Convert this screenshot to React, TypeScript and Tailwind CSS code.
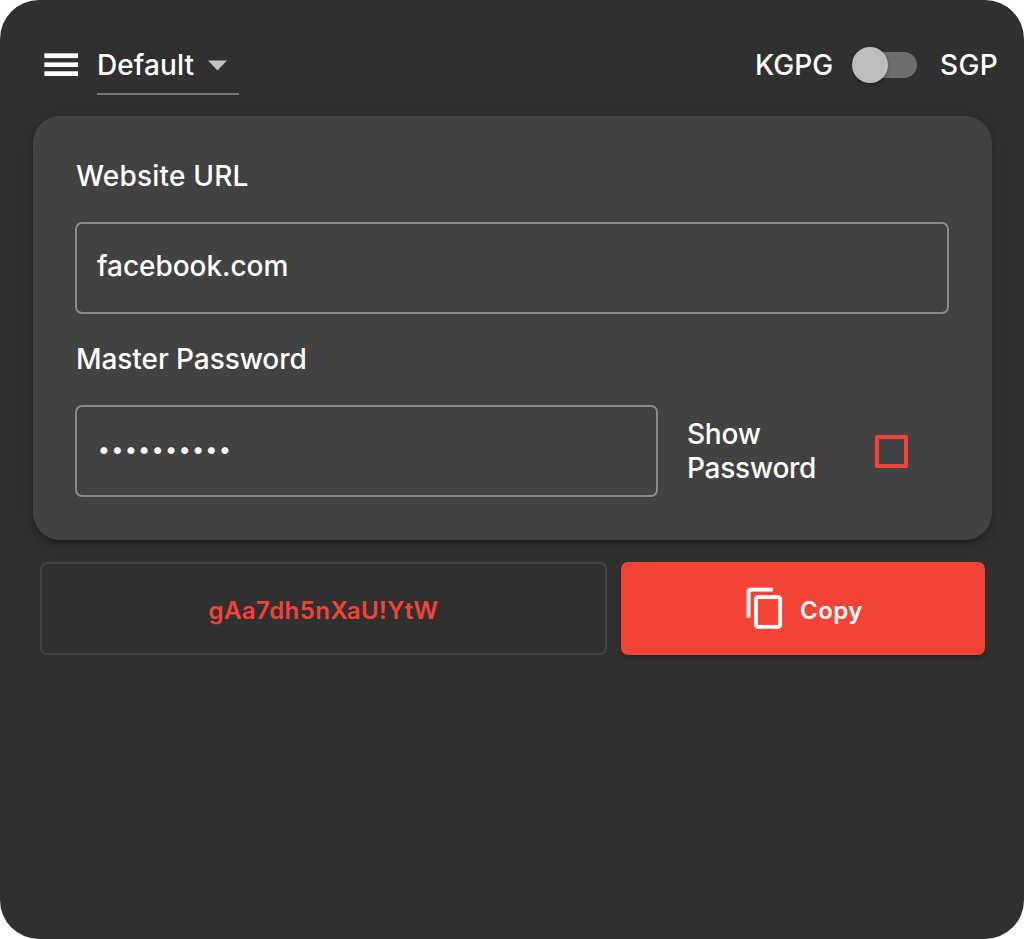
import React from "react";

function MenuIcon() {
  return (
    <svg className="h-[23px] w-[34px] shrink-0" viewBox="0 0 34 23" fill="#fff" aria-hidden="true">
      <rect x="0.4" y="0.3" width="33.6" height="4.8" />
      <rect x="0.4" y="9.4" width="33.6" height="4.6" />
      <rect x="0.4" y="18.3" width="33.6" height="4.7" />
    </svg>
  );
}

function CopyIcon() {
  return (
    <svg className="h-[44.6px] w-[44.6px] shrink-0" viewBox="0 0 24 24" fill="currentColor" stroke="currentColor" strokeWidth="0.1" aria-hidden="true">
      <path d="M16 1H4c-1.1 0-2 .9-2 2v14h2V3h12V1zm3 4H8c-1.1 0-2 .9-2 2v14c0 1.1.9 2 2 2h11c1.1 0 2-.9 2-2V7c0-1.1-.9-2-2-2zm0 16H8V7h11v14z" />
    </svg>
  );
}

function Header() {
  return (
    <header className="flex h-[116px] items-start pl-11">
      <button className="mt-[53px]" aria-label="Menu">
        <MenuIcon />
      </button>
      <button className="mt-9 ml-[19px] flex h-[59px] w-[142px] items-center border-b-2 border-[#797979] text-left">
        <span className="w-[111px] whitespace-nowrap tracking-[0.1px]">Default</span>
        <svg className="mt-[2px] h-[11px] w-[19px]" viewBox="0 0 19 11" fill="#c1c1c1" aria-hidden="true">
          <path d="M0 .5h19L9.500 10.600z" />
        </svg>
      </button>
      <div className="mt-[47px] ml-auto flex h-9 items-center pr-[26px]">
        <span>KGPG</span>
        <button className="ml-[19px] flex h-9 w-[65px] items-center" role="switch" aria-checked="false" aria-label="Mode">
          <span className="z-10 size-9 shrink-0 rounded-full bg-[#bdbdbd] shadow-[0_2px_4px_rgba(0,0,0,0.25)]" />
          <span className="-ml-7 h-[26px] w-[57px] shrink-0 rounded-full bg-[#6e6e6e]" />
        </button>
        <span className="ml-[23px] tracking-[0.3px]">SGP</span>
      </div>
    </header>
  );
}

export default function App() {
  return (
    <div className="h-[939px] w-[1024px] bg-white">
      <main className="h-[939px] overflow-hidden rounded-[39px] bg-[#303030] font-['Inter','Liberation_Sans',sans-serif] text-[28px] leading-[34px] font-medium text-white">
        <Header />
        <section className="mr-8 ml-[33px] h-[424px] rounded-[27px] bg-[#424242] px-[43px] pt-[43px] shadow-[0_4px_3px_-2px_rgba(0,0,0,0.12),0_3px_5px_rgba(0,0,0,0.12),0_4px_16px_rgba(0,0,0,0.22)]">
          <div className="flex h-[63px]">
            <span className="whitespace-nowrap tracking-[0.2px]">Website URL</span>
          </div>
          <div className="-ml-px flex h-[92px] w-[874px] items-center rounded-[7px] border-2 border-[#8b8b8b] pb-1 pl-5">
            <span className="tracking-[-0.05px]">facebook.com</span>
          </div>
          <div className="mt-7 flex h-[63px]">
            <span className="whitespace-nowrap tracking-[-0.07px]">Master Password</span>
          </div>
          <div className="-ml-px flex items-center">
            <div className="flex h-[92px] w-[583px] items-center rounded-[7px] border-2 border-[#8b8b8b] pb-1 pl-[21px]">
              <span className="text-[22px] tracking-[1.72px]">••••••••••</span>
            </div>
            <span className="ml-[29px] w-[160px] tracking-[-0.25px]">
              Show
              <br />
              Password
            </span>
            <button className="ml-7 size-[33px] rounded-[2px] border-4 border-[#f44336]" role="checkbox" aria-checked="false" aria-label="Show password" />
          </div>
        </section>
        <div className="mt-[22px] ml-10 flex gap-3.5 text-[24px] font-semibold">
          <div className="flex h-[93px] w-[567px] items-center justify-center rounded-[7px] border-2 border-[#454545] pt-1 text-[#f44336]">
            <span className="tracking-[0.45px]">gAa7dh5nXaU!YtW</span>
          </div>
          <button className="flex h-[93px] w-[364px] items-center rounded-[7px] bg-[#f44336] pl-[121.5px] shadow-[0_3px_4px_rgba(0,0,0,0.25)]">
            <CopyIcon />
            <span className="mt-1 ml-[13px] tracking-[0.45px]">Copy</span>
          </button>
        </div>
      </main>
    </div>
  );
}
